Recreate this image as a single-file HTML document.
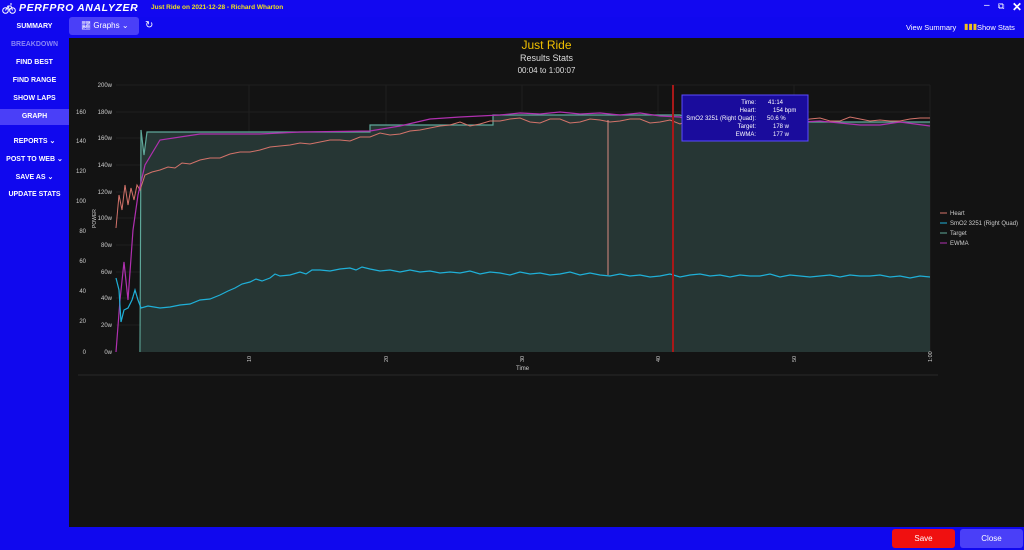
<!DOCTYPE html>
<html><head><meta charset="utf-8"><style>
*{margin:0;padding:0;box-sizing:border-box}
body{width:1024px;height:550px;overflow:hidden;background:#1008ee;font-family:"Liberation Sans",sans-serif;position:relative}
.a{position:absolute}
.nav{position:absolute;left:0;width:69px;text-align:center;color:#fff;font-size:7px;font-weight:bold}
</style></head><body>
<div class="a" style="left:0;top:0;width:1024px;height:17px;background:#1208f0"></div>
<svg class="a" style="left:2px;top:3px" width="14" height="11" viewBox="0 0 14 11"><circle cx="3.5" cy="7.5" r="2.8" fill="none" stroke="#fff" stroke-width="1"/><circle cx="10.5" cy="7.5" r="2.8" fill="none" stroke="#fff" stroke-width="1"/><path d="M3.5 7.5 L6 3 L9 3 L10.5 7.5 M6 3 L7.5 7 M8 1 h2" stroke="#fff" fill="none" stroke-width="1"/></svg>
<div class="a" style="left:19px;top:2px;color:#fff;font-size:10.5px;font-weight:bold;font-style:italic;letter-spacing:0.6px">PERFPRO ANALYZER</div>
<div class="a" style="left:151px;top:4px;color:#f0e020;font-size:6.5px;font-weight:bold">Just Ride on 2021-12-28 - Richard Wharton</div>
<div class="a" style="left:984px;top:0px;color:#fff;font-size:10px">–</div>
<div class="a" style="left:998px;top:1px;color:#fff;font-size:9px">⧉</div>
<div class="a" style="left:1012px;top:0px;color:#fff;font-size:12px;font-weight:bold">✕</div>
<div class="nav" style="top:23px">SUMMARY</div>
<div class="nav" style="top:41px;color:#8a86f5">BREAKDOWN</div>
<div class="nav" style="top:59px">FIND BEST</div>
<div class="nav" style="top:77px">FIND RANGE</div>
<div class="nav" style="top:95px">SHOW LAPS</div>
<div class="a" style="left:0;top:109px;width:69px;height:16px;background:#4a3ff8"></div>
<div class="nav" style="top:113px">GRAPH</div>
<div class="nav" style="top:137px">REPORTS ⌄</div>
<div class="nav" style="top:155px">POST TO WEB ⌄</div>
<div class="nav" style="top:173px">SAVE AS ⌄</div>
<div class="nav" style="top:191px">UPDATE STATS</div>
<div class="a" style="left:69px;top:17px;width:70px;height:18px;background:#4a3ff8;border-radius:3px;color:#fff;font-size:8px;padding:4px 0 0 12px">📈︎ Graphs ⌄</div>
<div class="a" style="left:145px;top:20px;color:#fff;font-size:10px">↻</div>
<div class="a" style="left:906px;top:23px;color:#fff;font-size:7.5px">View Summary</div>
<div class="a" style="left:964px;top:22px;color:#f0c020;font-size:8px">▮▮▮</div>
<div class="a" style="left:977px;top:23px;color:#fff;font-size:7.5px">Show Stats</div>
<div class="a" style="left:69px;top:38px;width:955px;height:489px;background:#131313"></div>
<div class="a" style="left:69px;top:38px;width:955px;text-align:center;color:#f0c000;font-size:12px">Just Ride</div>
<div class="a" style="left:69px;top:53px;width:955px;text-align:center;color:#ddd;font-size:9px">Results Stats</div>
<div class="a" style="left:69px;top:66px;width:955px;text-align:center;color:#ddd;font-size:8px">00:04 to 1:00:07</div>
<svg class="a" style="left:0;top:0" width="1024" height="550" font-family="Liberation Sans" font-size="6" fill="#ccc">
<g stroke="#1f1f1f" stroke-width="1">
<line x1="116" y1="85" x2="930" y2="85"/><line x1="116" y1="112" x2="930" y2="112"/><line x1="116" y1="138" x2="930" y2="138"/><line x1="116" y1="165" x2="930" y2="165"/><line x1="116" y1="192" x2="930" y2="192"/><line x1="116" y1="218" x2="930" y2="218"/><line x1="116" y1="245" x2="930" y2="245"/><line x1="116" y1="272" x2="930" y2="272"/><line x1="116" y1="298" x2="930" y2="298"/><line x1="116" y1="325" x2="930" y2="325"/>
<line x1="249" y1="85" x2="249" y2="352"/><line x1="386" y1="85" x2="386" y2="352"/><line x1="522" y1="85" x2="522" y2="352"/><line x1="658" y1="85" x2="658" y2="352"/><line x1="794" y1="85" x2="794" y2="352"/><line x1="930" y1="85" x2="930" y2="352"/>
</g>
<polygon points="141,352 141,130 144,155 147,132 370,132 370,125 493,125 493,115 680,115 700,122 930,122 930,352" fill="#263634"/>
<polyline points="140,352 141,130 144,155 147,132 370,132 370,125 493,125 493,115 680,115 700,122 930,122" fill="none" stroke="#5fa89a" stroke-width="1.2"/>
<polyline points="116,228 119,195 122,210 125,185 128,205 131,188 134,200 137,185 140,190 145,175 152,172 160,170 168,167 175,168 182,163 190,164 200,160 210,158 220,158 230,154 240,152 250,152 260,150 270,147 280,146 290,145 300,143 310,144 320,142 330,140 340,140 350,141 360,137 370,137 380,133 390,135 400,134 410,131 420,130 430,128 440,126 450,125 460,122 470,126 480,124 490,121 500,121 510,119 520,118 530,122 540,123 550,119 560,119 570,123 580,122 590,119 600,120 610,122 620,121 630,119 640,119 650,123 660,122 670,120 680,124 690,120 700,121 710,125 720,124 730,120 740,120 750,117 760,121 770,117 780,120 790,122 800,121 810,119 820,118 830,121 840,121 850,117 860,119 870,121 880,120 890,121 900,121 910,119 920,118 930,118" fill="none" stroke="#d4736a" stroke-width="1"/>
<line x1="608" y1="120" x2="608" y2="275" stroke="#d88a80" stroke-width="1"/>
<polyline points="116,352 120,300 124,262 128,300 133,230 138,195 145,165 160,140 200,134 260,134 300,132 370,131 400,126 430,119 445,118 460,117 480,116 500,115 520,113 540,114 560,112 580,114 600,113 620,115 640,113 660,116 680,117 700,124 720,122 740,125 760,122 780,124 800,122 820,121 840,123 860,125 880,125 900,122 930,126" fill="none" stroke="#b030b0" stroke-width="1.2"/>
<polyline points="116,278 119,290 121,322 124,310 128,308 132,300 135,290 138,300 141,308 148,306 160,308 170,307 180,305 190,304 200,300 210,299 220,295 228,291 235,288 242,284 250,282 256,279 262,281 270,278 275,274 280,276 290,275 300,272 306,274 312,270 320,270 330,271 340,269 350,268 356,270 362,267 370,269 380,271 390,270 400,272 410,270 420,272 430,271 440,273 450,272 460,273 470,271 480,274 490,272 500,273 510,275 520,272 530,274 540,273 550,275 560,274 570,272 580,275 590,273 600,275 610,276 620,274 630,276 640,275 650,277 660,276 670,274 680,277 690,275 700,274 710,276 720,275 730,277 740,275 750,276 760,276 770,274 780,277 790,275 800,276 810,277 820,276 830,275 840,277 850,275 860,276 870,276 880,275 890,277 900,276 910,278 920,276 930,277" fill="none" stroke="#1fb0d8" stroke-width="1.2"/>
<line x1="673" y1="85" x2="673" y2="352" stroke="#a81818" stroke-width="2"/>
<line x1="78" y1="375" x2="938" y2="375" stroke="#2a2a2a"/>
<g text-anchor="end"><text x="112" y="87">200w</text><text x="112" y="114">180w</text><text x="112" y="140">160w</text><text x="112" y="167">140w</text><text x="112" y="194">120w</text><text x="112" y="220">100w</text><text x="112" y="247">80w</text><text x="112" y="274">60w</text><text x="112" y="300">40w</text><text x="112" y="327">20w</text><text x="112" y="354">0w</text>
<text x="86" y="114">160</text><text x="86" y="143">140</text><text x="86" y="173">120</text><text x="86" y="203">100</text><text x="86" y="233">80</text><text x="86" y="263">60</text><text x="86" y="293">40</text><text x="86" y="323">20</text><text x="86" y="354">0</text></g>
<text transform="translate(96,228) rotate(-90)" font-size="5">POWER</text>
<g font-size="5.5"><text transform="translate(251,362) rotate(-90)">10</text><text transform="translate(388,362) rotate(-90)">20</text><text transform="translate(524,362) rotate(-90)">30</text><text transform="translate(660,362) rotate(-90)">40</text><text transform="translate(796,362) rotate(-90)">50</text><text transform="translate(932,362) rotate(-90)">1:00</text></g>
<text x="516" y="370">Time</text>
<g font-size="6"><line x1="940" y1="213" x2="947" y2="213" stroke="#d4736a"/><text x="950" y="215">Heart</text>
<line x1="940" y1="223" x2="947" y2="223" stroke="#1fb0d8"/><text x="950" y="225">SmO2 3251 (Right Quad)</text>
<line x1="940" y1="233" x2="947" y2="233" stroke="#5fa89a"/><text x="950" y="235">Target</text>
<line x1="940" y1="243" x2="947" y2="243" stroke="#b030b0"/><text x="950" y="245">EWMA</text></g>
<rect x="682" y="95" width="126" height="46" fill="#1a0c9c" stroke="#5b4bff"/>
<g fill="#fff" font-size="6"><g text-anchor="end"><text x="756" y="104">Time:</text><text x="756" y="112">Heart:</text><text x="756" y="120">SmO2 3251 (Right Quad):</text><text x="756" y="128">Target:</text><text x="756" y="136">EWMA:</text></g>
<text x="768" y="104">41:14</text><text x="773" y="112">154 bpm</text><text x="767" y="120">50.6 %</text><text x="773" y="128">178 w</text><text x="773" y="136">177 w</text></g>
</svg>
<div class="a" style="left:892px;top:529px;width:63px;height:19px;background:#f01010;border-radius:3px;color:#fff;font-size:8px;text-align:center;line-height:19px">Save</div>
<div class="a" style="left:960px;top:529px;width:63px;height:19px;background:#4a3ff8;border-radius:3px;color:#fff;font-size:8px;text-align:center;line-height:19px">Close</div>
</body></html>
